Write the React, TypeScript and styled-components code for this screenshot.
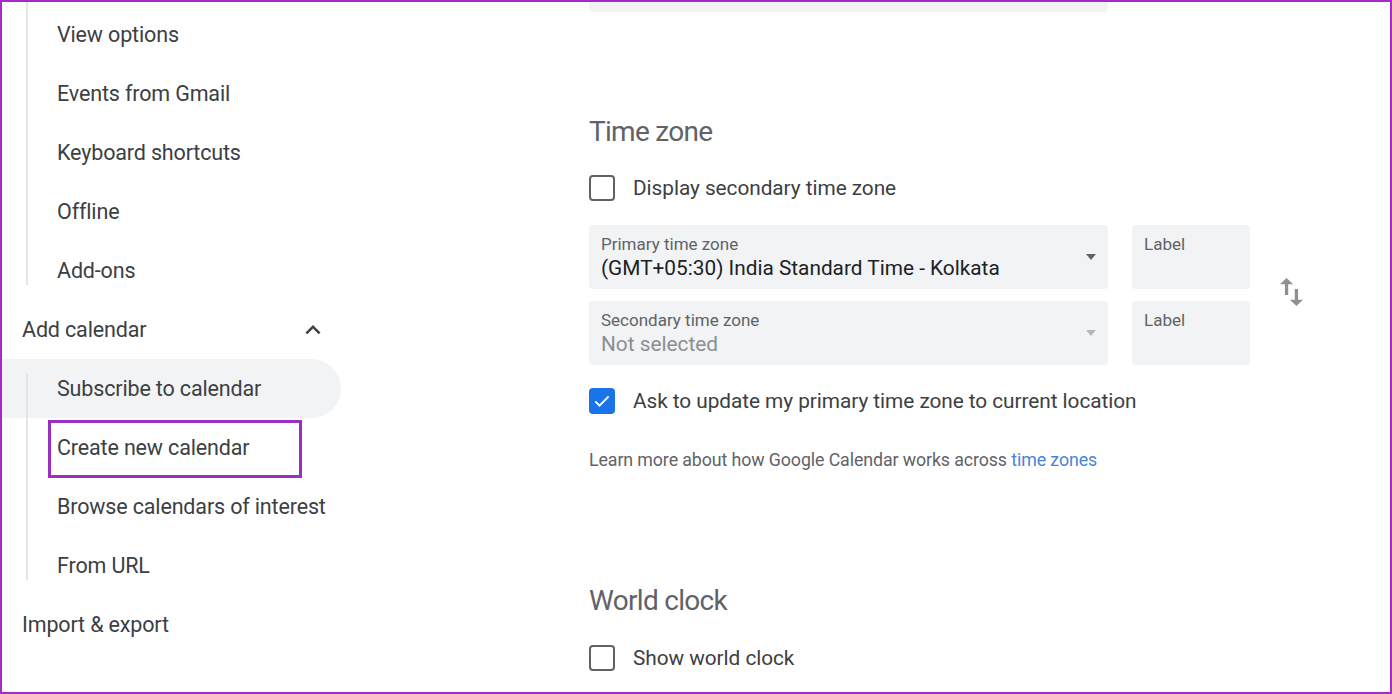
import React from "react";
import styled, { createGlobalStyle } from "styled-components";

const Global = createGlobalStyle`
  html, body { margin: 0; padding: 0; background: #fff; }
  body { font-family: Roboto, "Noto Sans", Arial, sans-serif; }
`;

const Frame = styled.div`
  width: 1392px;
  height: 694px;
  box-sizing: border-box;
  border: 2px solid #a52bc9;
  overflow: hidden;
  display: flex;
  background: #fff;
  color: #3c4043;
`;

const Sidebar = styled.nav`
  width: 345px;
  flex: none;
  padding-top: 3px;
  display: flex;
  flex-direction: column;
`;

const SubList = styled.div<{ $clipTop?: boolean }>`
  position: relative;
  display: flex;
  flex-direction: column;
  &::before {
    content: "";
    position: absolute;
    left: 24px;
    top: ${(p) => (p.$clipTop ? "-10px" : "15px")};
    bottom: 15px;
    width: 2px;
    background: #e3e5e8;
    z-index: 1;
  }
`;

const NavRow = styled.div<{ $sub?: boolean; $active?: boolean }>`
  position: relative;
  height: 59px;
  display: flex;
  align-items: center;
  justify-content: space-between;
  box-sizing: border-box;
  padding-left: ${(p) => (p.$sub ? "55px" : "20px")};
  padding-right: 19px;
  width: ${(p) => (p.$active ? "339px" : "100%")};
  background: ${(p) => (p.$active ? "#f1f3f4" : "transparent")};
  border-radius: 0 30px 30px 0;
  font-size: 21.5px;
  letter-spacing: -0.15px;
  color: #3c4043;
  white-space: nowrap;
`;

const Highlight = styled.div`
  position: absolute;
  left: 46px;
  top: 2px;
  width: 254px;
  height: 58px;
  box-sizing: border-box;
  border: 3px solid #9b2fc0;
  pointer-events: none;
`;

const Main = styled.main`
  flex: 1;
  padding-left: 242px;
  display: flex;
  flex-direction: column;
`;

const TopField = styled.div`
  width: 519px;
  height: 63px;
  margin-top: -53px;
  background: #f1f3f4;
  border-radius: 4px;
`;

const Heading = styled.h2<{ $mt: number }>`
  margin: ${(p) => p.$mt}px 0 0;
  font-size: 28px;
  line-height: 36px;
  font-weight: 400;
  letter-spacing: -0.7px;
  color: #5f6368;
`;

const CheckRow = styled.label<{ $mt: number }>`
  margin-top: ${(p) => p.$mt}px;
  display: flex;
  align-items: center;
  height: 26px;
  gap: 18px;
  font-size: 20.8px;
  letter-spacing: -0.05px;
  color: #3c4043;
`;

const Box = styled.span<{ $checked?: boolean }>`
  width: 26px;
  height: 26px;
  box-sizing: border-box;
  border-radius: 4px;
  border: ${(p) => (p.$checked ? "none" : "2.5px solid #5f6368")};
  background: ${(p) => (p.$checked ? "#1a73e8" : "transparent")};
  display: flex;
  align-items: center;
  justify-content: center;
  flex: none;
`;

const FieldGrid = styled.div`
  margin-top: 24px;
  display: grid;
  grid-template-columns: 519px 118px 30px;
  grid-template-rows: 64px 64px;
  column-gap: 24px;
  row-gap: 12px;
  align-items: stretch;
`;

const Field = styled.div`
  position: relative;
  background: #f1f3f4;
  border-radius: 4px;
  padding: 10px 12px 0;
  box-sizing: border-box;
  display: flex;
  flex-direction: column;
`;

const FieldLabel = styled.span`
  font-size: 17px;
  line-height: 19px;
  letter-spacing: 0;
  color: #5f6368;
`;

const FieldValue = styled.span<{ $muted?: boolean }>`
  font-size: 20.8px;
  line-height: 28px;
  letter-spacing: 0;
  color: ${(p) => (p.$muted ? "#8a8f94" : "#202124")};
`;

const Caret = styled.span<{ $muted?: boolean }>`
  position: absolute;
  right: 12px;
  top: 29px;
  width: 0;
  height: 0;
  border-left: 5.5px solid transparent;
  border-right: 5.5px solid transparent;
  border-top: 6px solid ${(p) => (p.$muted ? "#b4b8bc" : "#5f6368")};
`;

const Swap = styled.div`
  grid-column: 3;
  grid-row: 1 / span 2;
  display: flex;
  align-items: center;
  margin-left: 6px;
  padding-bottom: 6px;
`;

const Help = styled.p`
  margin: 36px 0 0;
  font-size: 17.8px;
  line-height: 20px;
  letter-spacing: -0.1px;
  color: #5f6368;
`;

const Link = styled.a`
  color: #4a84d4;
  text-decoration: none;
`;

const ChevronUp = () => (
  <svg width="30" height="30" viewBox="0 0 24 24" fill="#3c4043">
    <path d="M12 8l-6 6 1.41 1.41L12 10.83l4.59 4.58L18 14z" />
  </svg>
);

const SwapIcon = () => (
  <svg width="23" height="28" viewBox="5 3 14 18" fill="#8d9196" preserveAspectRatio="none">
    <path d="M16 17.01V10h-2v7.01h-3L15 21l4-3.99h-3zM9 3L5 6.99h3V14h2V6.99h3L9 3z" />
  </svg>
);

const Check = () => (
  <svg width="20" height="20" viewBox="0 0 24 24" fill="none" stroke="#fff" strokeWidth="2.4">
    <path d="M4 12.5l5 5L20 6.5" />
  </svg>
);

export default function App() {
  return (
    <>
      <Global />
      <Frame>
        <Sidebar>
          <SubList $clipTop>
            <NavRow $sub>View options</NavRow>
            <NavRow $sub>Events from Gmail</NavRow>
            <NavRow $sub>Keyboard shortcuts</NavRow>
            <NavRow $sub>Offline</NavRow>
            <NavRow $sub>Add-ons</NavRow>
          </SubList>
          <NavRow>
            Add calendar
            <ChevronUp />
          </NavRow>
          <SubList>
            <NavRow $sub $active>Subscribe to calendar</NavRow>
            <NavRow $sub>
              Create new calendar
              <Highlight />
            </NavRow>
            <NavRow $sub>Browse calendars of interest</NavRow>
            <NavRow $sub>From URL</NavRow>
          </SubList>
          <NavRow>Import &amp; export</NavRow>
        </Sidebar>
        <Main>
          <TopField />
          <Heading $mt={102}>Time zone</Heading>
          <CheckRow $mt={25}>
            <Box />
            Display secondary time zone
          </CheckRow>
          <FieldGrid>
            <Field>
              <FieldLabel>Primary time zone</FieldLabel>
              <FieldValue>(GMT+05:30) India Standard Time - Kolkata</FieldValue>
              <Caret />
            </Field>
            <Field>
              <FieldLabel>Label</FieldLabel>
            </Field>
            <Swap>
              <SwapIcon />
            </Swap>
            <Field>
              <FieldLabel>Secondary time zone</FieldLabel>
              <FieldValue $muted>Not selected</FieldValue>
              <Caret $muted />
            </Field>
            <Field>
              <FieldLabel>Label</FieldLabel>
            </Field>
          </FieldGrid>
          <CheckRow $mt={23}>
            <Box $checked>
              <Check />
            </Box>
            Ask to update my primary time zone to current location
          </CheckRow>
          <Help>
            Learn more about how Google Calendar works across <Link href="#">time zones</Link>
          </Help>
          <Heading $mt={113}>World clock</Heading>
          <CheckRow $mt={26}>
            <Box />
            Show world clock
          </CheckRow>
        </Main>
      </Frame>
    </>
  );
}
